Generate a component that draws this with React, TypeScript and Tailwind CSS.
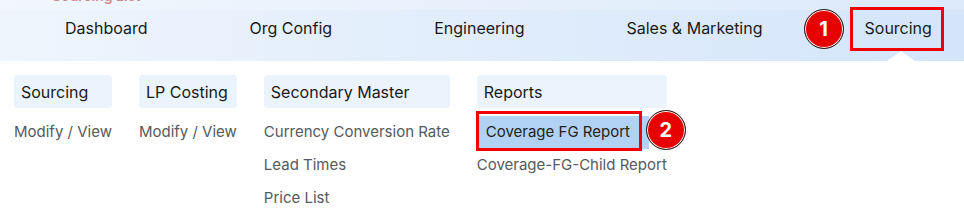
import React from "react";

const navItems = ["Dashboard", "Org Config", "Engineering", "Sales & Marketing"];

const columns = [
  { title: "Sourcing", items: ["Modify / View"] },
  { title: "LP Costing", items: ["Modify / View"] },
  { title: "Secondary Master", items: ["Currency Conversion Rate", "Lead Times", "Price List"] },
  { title: "Reports", items: ["Coverage FG Report", "Coverage-FG-Child Report"] },
];

function Badge({ n, className }: { n: string; className: string }) {
  return (
    <div
      className={`absolute w-[40px] h-[40px] rounded-full bg-[#e60000] border border-[#222] shadow-[0_0_0_1px_#fff_inset] flex items-center justify-center text-white font-bold text-[20px] leading-none ${className}`}
    >
      {n}
    </div>
  );
}

export default function App() {
  return (
    <div className="w-[964px] h-[219px] bg-white overflow-hidden font-['Inter','Liberation_Sans',sans-serif]">
      {/* top nav */}
      <div className="h-[61px] bg-gradient-to-r from-[#eef5fd] to-[#d4e5fa] relative">
        <div className="h-[10px] overflow-hidden pl-[52px] bg-white/20">
          <div className="-mt-[12px] text-[14px] font-semibold text-[#c25b5b] leading-[16px] opacity-70">Sourcing List</div>
        </div>
        <div className="flex gap-[102px] pl-[65px] pt-[6px] text-[16px] leading-6 text-[#1a1a1a]">
          {navItems.map((n) => (
            <span key={n}>{n}</span>
          ))}
          <span className="relative">
            Sourcing
            <div className="absolute -left-[15px] -top-[9px] w-[94px] h-[44px] border-[3px] border-[#f00000]" />
            <Badge n="1" className="-left-[61px] -top-[7px]" />
            <div className="absolute left-[22px] top-[35px] w-0 h-0 border-l-[14px] border-r-[14px] border-b-[10px] border-l-transparent border-r-transparent border-b-white" />
          </span>
        </div>
      </div>

      {/* dropdown */}
      <div className="flex gap-[27px] pl-[14px] pt-[14px]">
        {columns.map((col) => (
          <div key={col.title} className="flex flex-col">
            <div className="h-[33px] rounded-[4px] bg-[#ebf3fd] px-[7px] flex items-center text-[16px] text-[#1a1a1a]">
              {col.title}
            </div>
            <div className="mt-[8px] flex flex-col">
              {col.items.map((it) =>
                it === "Coverage FG Report" ? (
                  <div key={it} className="relative w-fit h-[33px] flex items-center bg-[#b2d2f3] pl-[9px] pr-[19px] text-[15px] text-[#222]">
                    {it}
                    <div className="absolute -left-[1px] -top-[5px] w-[166px] h-[40px] border-[3px] border-[#f00000]" />
                    <Badge n="2" className="left-[169px] -top-[6px]" />
                  </div>
                ) : (
                  <div key={it} className="h-[33px] flex items-center text-[15px] text-[#555a60] whitespace-nowrap">
                    {it}
                  </div>
                )
              )}
            </div>
          </div>
        ))}
      </div>
    </div>
  );
}
